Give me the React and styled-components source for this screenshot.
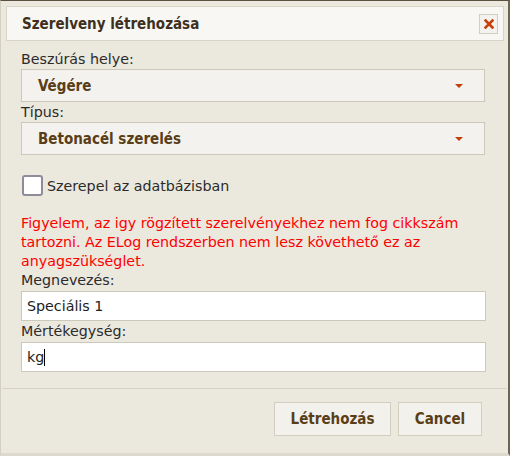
import React from "react";
import styled, { createGlobalStyle } from "styled-components";

const Global = createGlobalStyle`
  html, body { margin: 0; padding: 0; background: #5b5140; }
  * { box-sizing: border-box; }
`;

const REG = `"DejaVu Sans", Verdana, sans-serif`;
const BOLD = `"DejaVu Sans Condensed", "DejaVu Sans", Verdana, sans-serif`;

const Dialog = styled.div`
  width: 510px;
  height: 456px;
  background: #ebe8de;
  border: 1px solid #d3cfc1;
  border-top-color: #5a5040;
  border-right: 2px solid #6d6552;
  border-bottom: 3px solid #ddd9cd;
  padding: 5px 4px 0 5px;
  font-family: ${REG};
  display: flex;
  flex-direction: column;
`;

const Header = styled.div`
  height: 35px;
  background: #f8f7f4;
  border: 1px solid #d8d4c8;
  display: flex;
  align-items: center;
  justify-content: space-between;
  padding: 0 5px 0 15px;
`;

const Title = styled.span`
  font-family: ${BOLD};
  font-weight: bold;
  font-size: 15px;
  color: #3e301c;
`;

const Close = styled.button`
  width: 19px;
  height: 20px;
  padding: 0;
  border: 1px solid #d2cec3;
  background: #f4f2ee;
  display: flex;
  align-items: center;
  justify-content: center;
  cursor: pointer;
`;

const Body = styled.div`
  padding: 9px 19px 0 15px;
  display: flex;
  flex-direction: column;
`;

const Label = styled.div`
  font-size: 14.25px;
  line-height: 18px;
  color: #2b2b2b;
  margin-top: ${(p) => p.$mt || 0}px;
`;

const Select = styled.div`
  height: 33px;
  margin-top: 1px;
  background: #f4f2ee;
  border: 1px solid #ccc8bc;
  display: flex;
  align-items: center;
  justify-content: space-between;
  padding: 0 21px 0 16px;
  font-family: ${BOLD};
  font-weight: bold;
  font-size: 15px;
  color: #5a3e17;
`;

const Caret = styled.span`
  width: 0;
  height: 0;
  border-left: 4px solid transparent;
  border-right: 4px solid transparent;
  border-top: 4px solid #c0400a;
`;

const CheckRow = styled.label`
  display: flex;
  align-items: center;
  gap: 4px;
  height: 21px;
  margin: 20px 0 0 1px;
  font-size: 14.25px;
  color: #2b2b2b;
`;

const Box = styled.span`
  width: 21px;
  height: 21px;
  border: 2px solid #8f8c9a;
  border-radius: 3px;
  background: #fff;
`;

const Warning = styled.p`
  margin: 18px 0 0;
  font-size: 14.25px;
  line-height: 19px;
  color: #ff0000;
`;

const Input = styled.div`
  height: 30px;
  margin-top: 2px;
  background: #fff;
  border: 1px solid #ccc8bc;
  display: flex;
  align-items: center;
  padding: 0 5px;
  font-size: 14.25px;
  color: #222;
  width: 465px;
`;

const CursorBar = styled.span`
  display: inline-block;
  width: 1px;
  height: 17px;
  background: #000;
`;

const Separator = styled.div`
  height: 1px;
  background: #d6d2c4;
  margin: 16px -3px 0 -4px;
`;

const Footer = styled.div`
  display: flex;
  justify-content: flex-end;
  gap: 7px;
  padding: 13px 22px 0 0;
`;

const Button = styled.button`
  height: 34px;
  width: ${(p) => p.$w}px;
  padding: 0;
  background: #f3f1ec;
  border: 1px solid #d2cec2;
  font-family: ${BOLD};
  font-weight: bold;
  font-size: 15px;
  color: #5a3e17;
  cursor: pointer;
`;

export default function App() {
  return (
    <>
      <Global />
      <Dialog>
        <Header>
          <Title>Szerelveny létrehozása</Title>
          <Close aria-label="close">
            <svg width="10" height="10" viewBox="0 0 10 10">
              <path d="M1.5 1.5 L8.5 8.5 M8.5 1.5 L1.5 8.5" stroke="#c8400a" strokeWidth="2.6" strokeLinecap="square" />
            </svg>
          </Close>
        </Header>
        <Body>
          <Label>Beszúrás helye:</Label>
          <Select>
            <span>Végére</span>
            <Caret />
          </Select>
          <Label $mt={1}>Típus:</Label>
          <Select>
            <span>Betonacél szerelés</span>
            <Caret />
          </Select>
          <CheckRow>
            <Box />
            <span>Szerepel az adatbázisban</span>
          </CheckRow>
          <Warning>
            Figyelem, az igy rögzített szerelvényekhez nem fog cikkszám tartozni. Az ELog rendszerben nem lesz követhető ez az anyagszükséglet.
          </Warning>
          <Label>Megnevezés:</Label>
          <Input>Speciális 1</Input>
          <Label $mt={1}>Mértékegység:</Label>
          <Input>kg<CursorBar /></Input>
        </Body>
        <Separator />
        <Footer>
          <Button $w={117}>Létrehozás</Button>
          <Button $w={84}>Cancel</Button>
        </Footer>
      </Dialog>
    </>
  );
}
